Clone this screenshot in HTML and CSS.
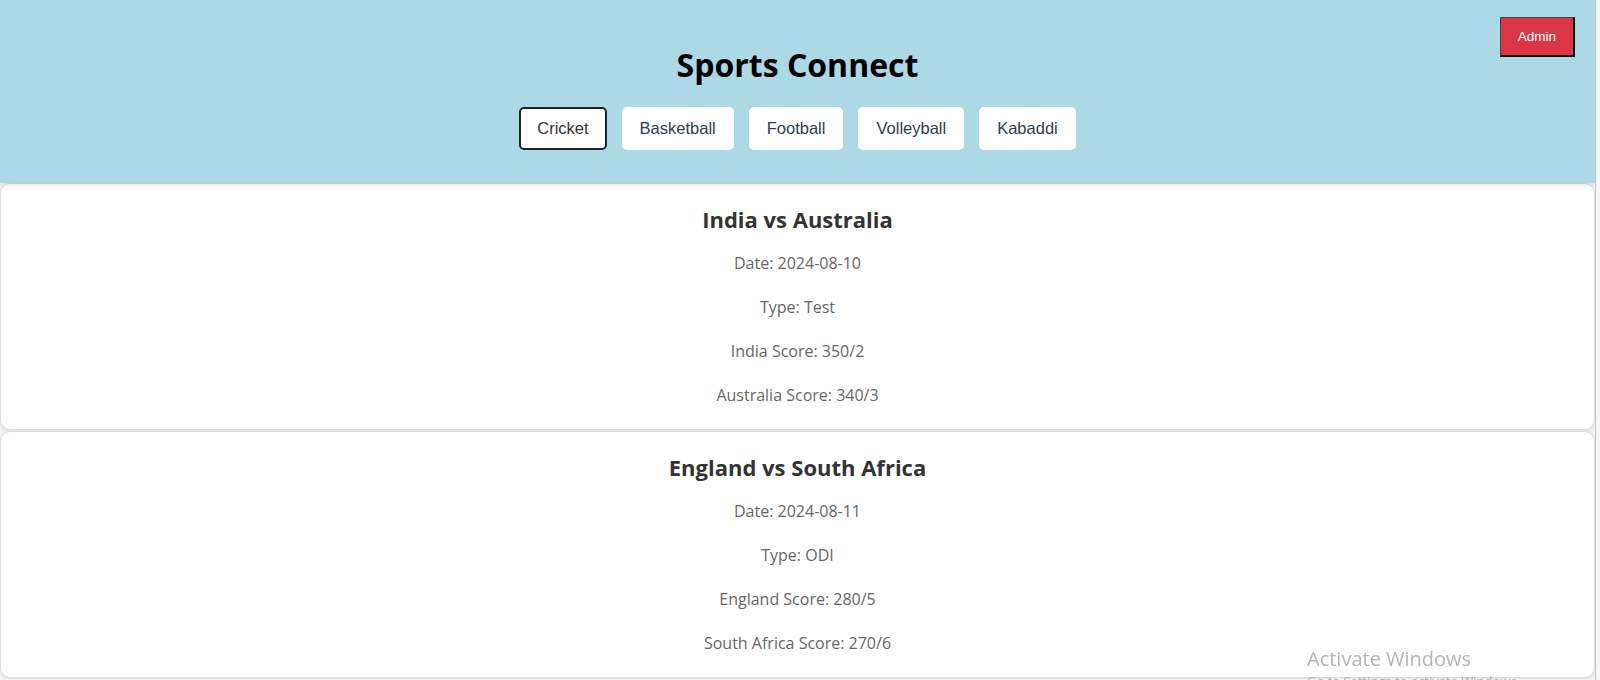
FILE: index.html
```html
<!DOCTYPE html>
<html lang="en">
<head>
<meta charset="utf-8">
<title>Sports Connect</title>
<link rel="stylesheet" href="styles.css">
</head>
<body>
<header class="site-header">
  <button class="admin-btn">Admin</button>
  <h1 class="site-title">Sports Connect</h1>
  <nav class="sport-nav">
    <button class="sport-btn active">Cricket</button>
    <button class="sport-btn">Basketball</button>
    <button class="sport-btn">Football</button>
    <button class="sport-btn">Volleyball</button>
    <button class="sport-btn">Kabaddi</button>
  </nav>
</header>
<main class="matches">
  <section class="match-card">
    <h2 class="match-title">India vs Australia</h2>
    <p class="match-info">Date: 2024-08-10</p>
    <p class="match-info">Type: Test</p>
    <p class="match-info">India Score: 350/2</p>
    <p class="match-info">Australia Score: 340/3</p>
  </section>
  <section class="match-card">
    <h2 class="match-title">England vs South Africa</h2>
    <p class="match-info">Date: 2024-08-11</p>
    <p class="match-info">Type: ODI</p>
    <p class="match-info">England Score: 280/5</p>
    <p class="match-info">South Africa Score: 270/6</p>
  </section>
</main>
<div class="scroll-track"></div>
<div class="activate">
  <div class="activate-title">Activate Windows</div>
  <div class="activate-sub">Go to Settings to activate Windows.</div>
</div>
</body>
</html>
```
FILE: styles.css
```css
html, body {
  margin: 0;
  padding: 0;
}
body {
  background: #f4f4f4;
  font-family: "Open Sans", "Noto Sans", sans-serif;
  margin-right: 5px;
  overflow: hidden;
}
.site-header {
  position: relative;
  z-index: 1;
  background: #add8e6;
  height: 183px;
  box-sizing: border-box;
  padding-top: 43px;
  text-align: center;
  box-shadow: 0 2px 4px rgba(0, 0, 0, 0.12);
}
.site-title {
  margin: 0;
  font-size: 32px;
  line-height: 44px;
  font-weight: 700;
  color: #000;
}
.sport-nav {
  display: flex;
  justify-content: center;
  gap: 15px;
  margin-top: 20px;
}
.sport-btn {
  font-family: "Liberation Sans", Arial, sans-serif;
  font-size: 16.5px;
  line-height: 19px;
  color: #2c3e50;
  background: #fff;
  border: 2px solid #fff;
  border-radius: 5px;
  padding: 10px 16px;
  cursor: pointer;
}
.sport-btn.active {
  border-color: #222;
  color: #333;
}
.admin-btn {
  position: absolute;
  top: 17px;
  right: 20px;
  font-family: "Liberation Sans", Arial, sans-serif;
  font-size: 13.5px;
  color: #fff;
  background: #dc3545;
  border-style: solid;
  border-width: 1px 2px 2px 1px;
  border-color: #444 #000 #000 #444;
  padding: 11px 17px;
  cursor: pointer;
}
.match-card {
  background: #fff;
  border: 1px solid #ddd;
  border-radius: 10px;
  box-shadow: 0 2px 4px rgba(0, 0, 0, 0.08);
  display: flex;
  flex-direction: column;
  align-items: center;
  gap: 12px;
  padding: 19px 20px 18px;
  margin-bottom: 1px;
}
.match-title {
  margin: 0;
  font-size: 22px;
  line-height: 32px;
  font-weight: 700;
  color: #333;
}
.match-info {
  margin: 0;
  font-size: 16px;
  line-height: 32px;
  color: #666;
}
.scroll-track {
  position: fixed;
  top: 0;
  right: 0;
  bottom: 0;
  width: 4px;
  background: #f6f6f6;
  border-left: 1px solid #c4c4c4;
}
.activate {
  position: fixed;
  left: 1307px;
  top: 646px;
  color: rgba(130, 130, 130, 0.6);
  font-family: "Open Sans", sans-serif;
}
.activate-title {
  font-size: 20px;
  line-height: 26px;
}
.activate-sub {
  font-size: 13px;
  line-height: 18px;
}
```
